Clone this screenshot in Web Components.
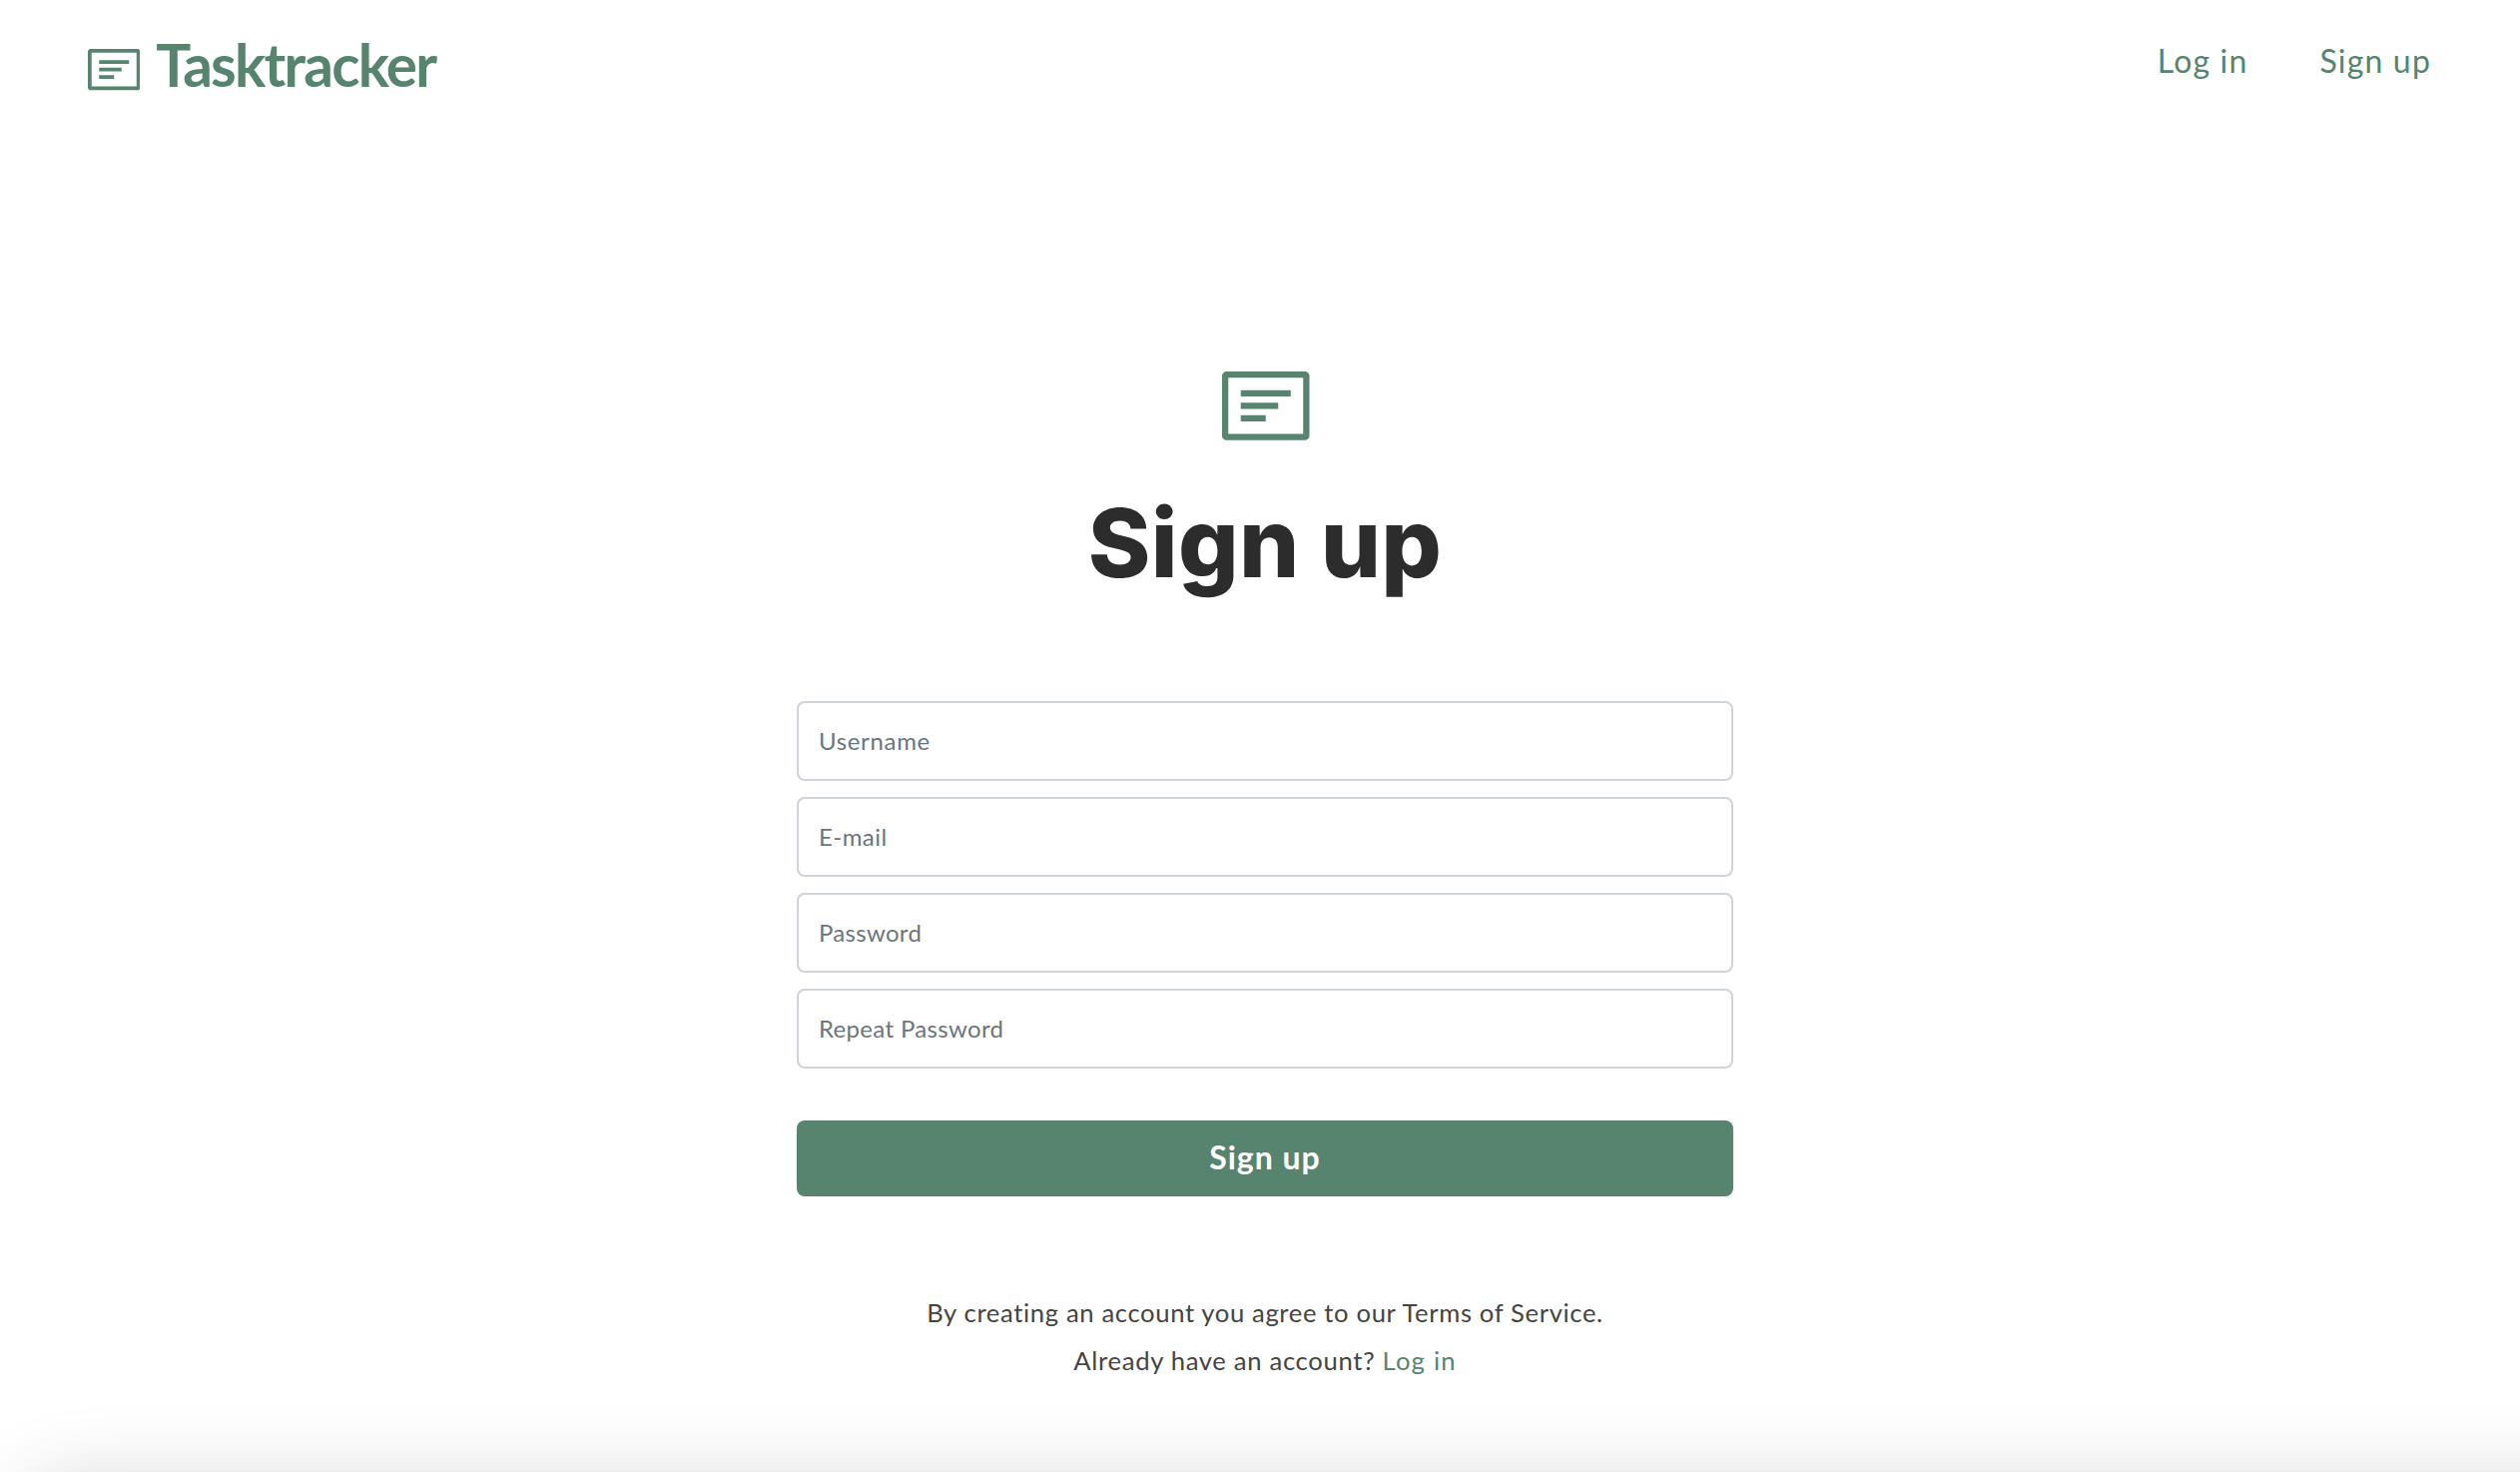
<!DOCTYPE html>
<html lang="en">
<head>
<meta charset="utf-8">
<title>Tasktracker</title>
<style>
html,body{margin:0;height:100%;background:#fff;overflow:hidden}
body{font-family:Lato,"Liberation Sans",sans-serif;color:#444;--green:#56846f}
</style>
</head>
<body>
<task-page>
  <task-header slot="header">
    <nav-link>Log in</nav-link>
    <nav-link>Sign up</nav-link>
  </task-header>
  <sign-up-form>
    <form-field label="Username" style="--ls:.66px"></form-field>
    <form-field label="E-mail" style="--ls:.45px"></form-field>
    <form-field label="Password" type="password" style="--ls:.3px"></form-field>
    <form-field label="Repeat Password" type="password" style="--ls:.33px"></form-field>
  </sign-up-form>
</task-page>
<script>
function define(name, html, setup) {
  customElements.define(name, class extends HTMLElement {
    constructor() {
      super();
      const t = document.createElement('template');
      t.innerHTML = html;
      this.attachShadow({ mode: 'open' }).append(t.content.cloneNode(true));
    }
    connectedCallback() { if (setup) setup(this); }
  });
}

define('task-icon', `
<style>:host{display:block;flex:none}svg{display:block;width:100%;height:100%}</style>
<svg viewBox="0 0 14 11" fill="var(--green)">
  <path fill-rule="evenodd" d="M.65 0H13.35Q13.55 0 13.7 .15L13.85 .3Q14 .45 14 .65V10.35Q14 10.55 13.85 10.7L13.7 10.85Q13.55 11 13.35 11H.65Q.45 11 .3 10.85L.15 10.7Q0 10.55 0 10.35V.65Q0 .45 .15 .3L.3 .15Q.45 0 .65 0ZM1 1V10H13V1Z"/>
  <path d="M3 3h8v1H3zM3 5h6v1H3zM3 7h4v1H3z"/>
</svg>`);

define('nav-link', `
<style>:host{display:block}a{display:block;color:var(--green);font-size:32px;line-height:40px;letter-spacing:1.17px;white-space:nowrap}</style>
<a><slot></slot></a>`);

define('task-header', `
<style>
:host{display:flex;flex:none;justify-content:space-between;align-items:flex-start;box-sizing:border-box;height:120px;padding:33px 89px 0 87.75px}
.brand{display:flex;align-items:flex-start}
task-icon{width:52.5px;height:41.25px;margin:16.25px 16px 0 0}
.name{color:var(--green);font-weight:700;font-size:58.5px;line-height:62px;letter-spacing:-1.75px}
nav{display:flex;gap:72px;padding-top:8px}
</style>
<div class="brand"><task-icon></task-icon><span class="name">Tasktracker</span></div>
<nav><slot></slot></nav>`);

define('form-field', `
<style>
:host{display:block}
input{display:block;box-sizing:border-box;width:100%;height:80px;margin:0;padding:0 20px 2px 20px;border:2px solid #ced4da;border-radius:8px;background:#fff;font:24px Lato,"Liberation Sans",sans-serif;letter-spacing:var(--ls);outline:0}
input::placeholder{color:#6c757d;opacity:1}
</style>
<input>`, el => {
  const input = el.shadowRoot.querySelector('input');
  input.placeholder = el.getAttribute('label');
  input.type = el.getAttribute('type') || 'text';
});

define('sign-up-form', `
<style>
:host{display:flex;flex-direction:column;align-items:center;width:938px}
task-icon{width:87.5px;height:68.75px;margin-left:2px}
h1{margin:45px 0 100px;color:#2c2c2c;font:800 95px/116px Inter,Lato,sans-serif;letter-spacing:.3px}
.fields{display:flex;flex-direction:column;gap:16px;width:100%}
button{width:100%;height:76px;margin:52px 0 92px;padding:0 0 4px;border:0;border-radius:8px;background:var(--green);color:#fff;font:700 32px Lato,"Liberation Sans",sans-serif;letter-spacing:.98px}
p{margin:0;font-size:25.6px;line-height:48px;letter-spacing:.65px;white-space:nowrap}
.have{letter-spacing:.7px}
a{color:var(--green);letter-spacing:1.2px}
</style>
<task-icon></task-icon>
<h1>Sign up</h1>
<div class="fields"><slot></slot></div>
<button type="button">Sign up</button>
<p>By creating an account you agree to our Terms of Service.</p>
<p class="have">Already have an account? <a>Log in</a></p>`);

define('task-page', `
<style>
:host{display:flex;flex-direction:column;height:1474px;overflow:hidden}
main{display:flex;justify-content:center;flex:none;box-sizing:border-box;height:1354px;padding:252.25px 0 0 10px}
.edge{flex:none;height:400px;margin:18px -160px 0 36px;background:#fff;box-shadow:0 0 80px rgba(0,0,0,.2)}
</style>
<slot name="header"></slot>
<main><slot></slot></main>
<div class="edge"></div>`);
</script>
</body>
</html>
